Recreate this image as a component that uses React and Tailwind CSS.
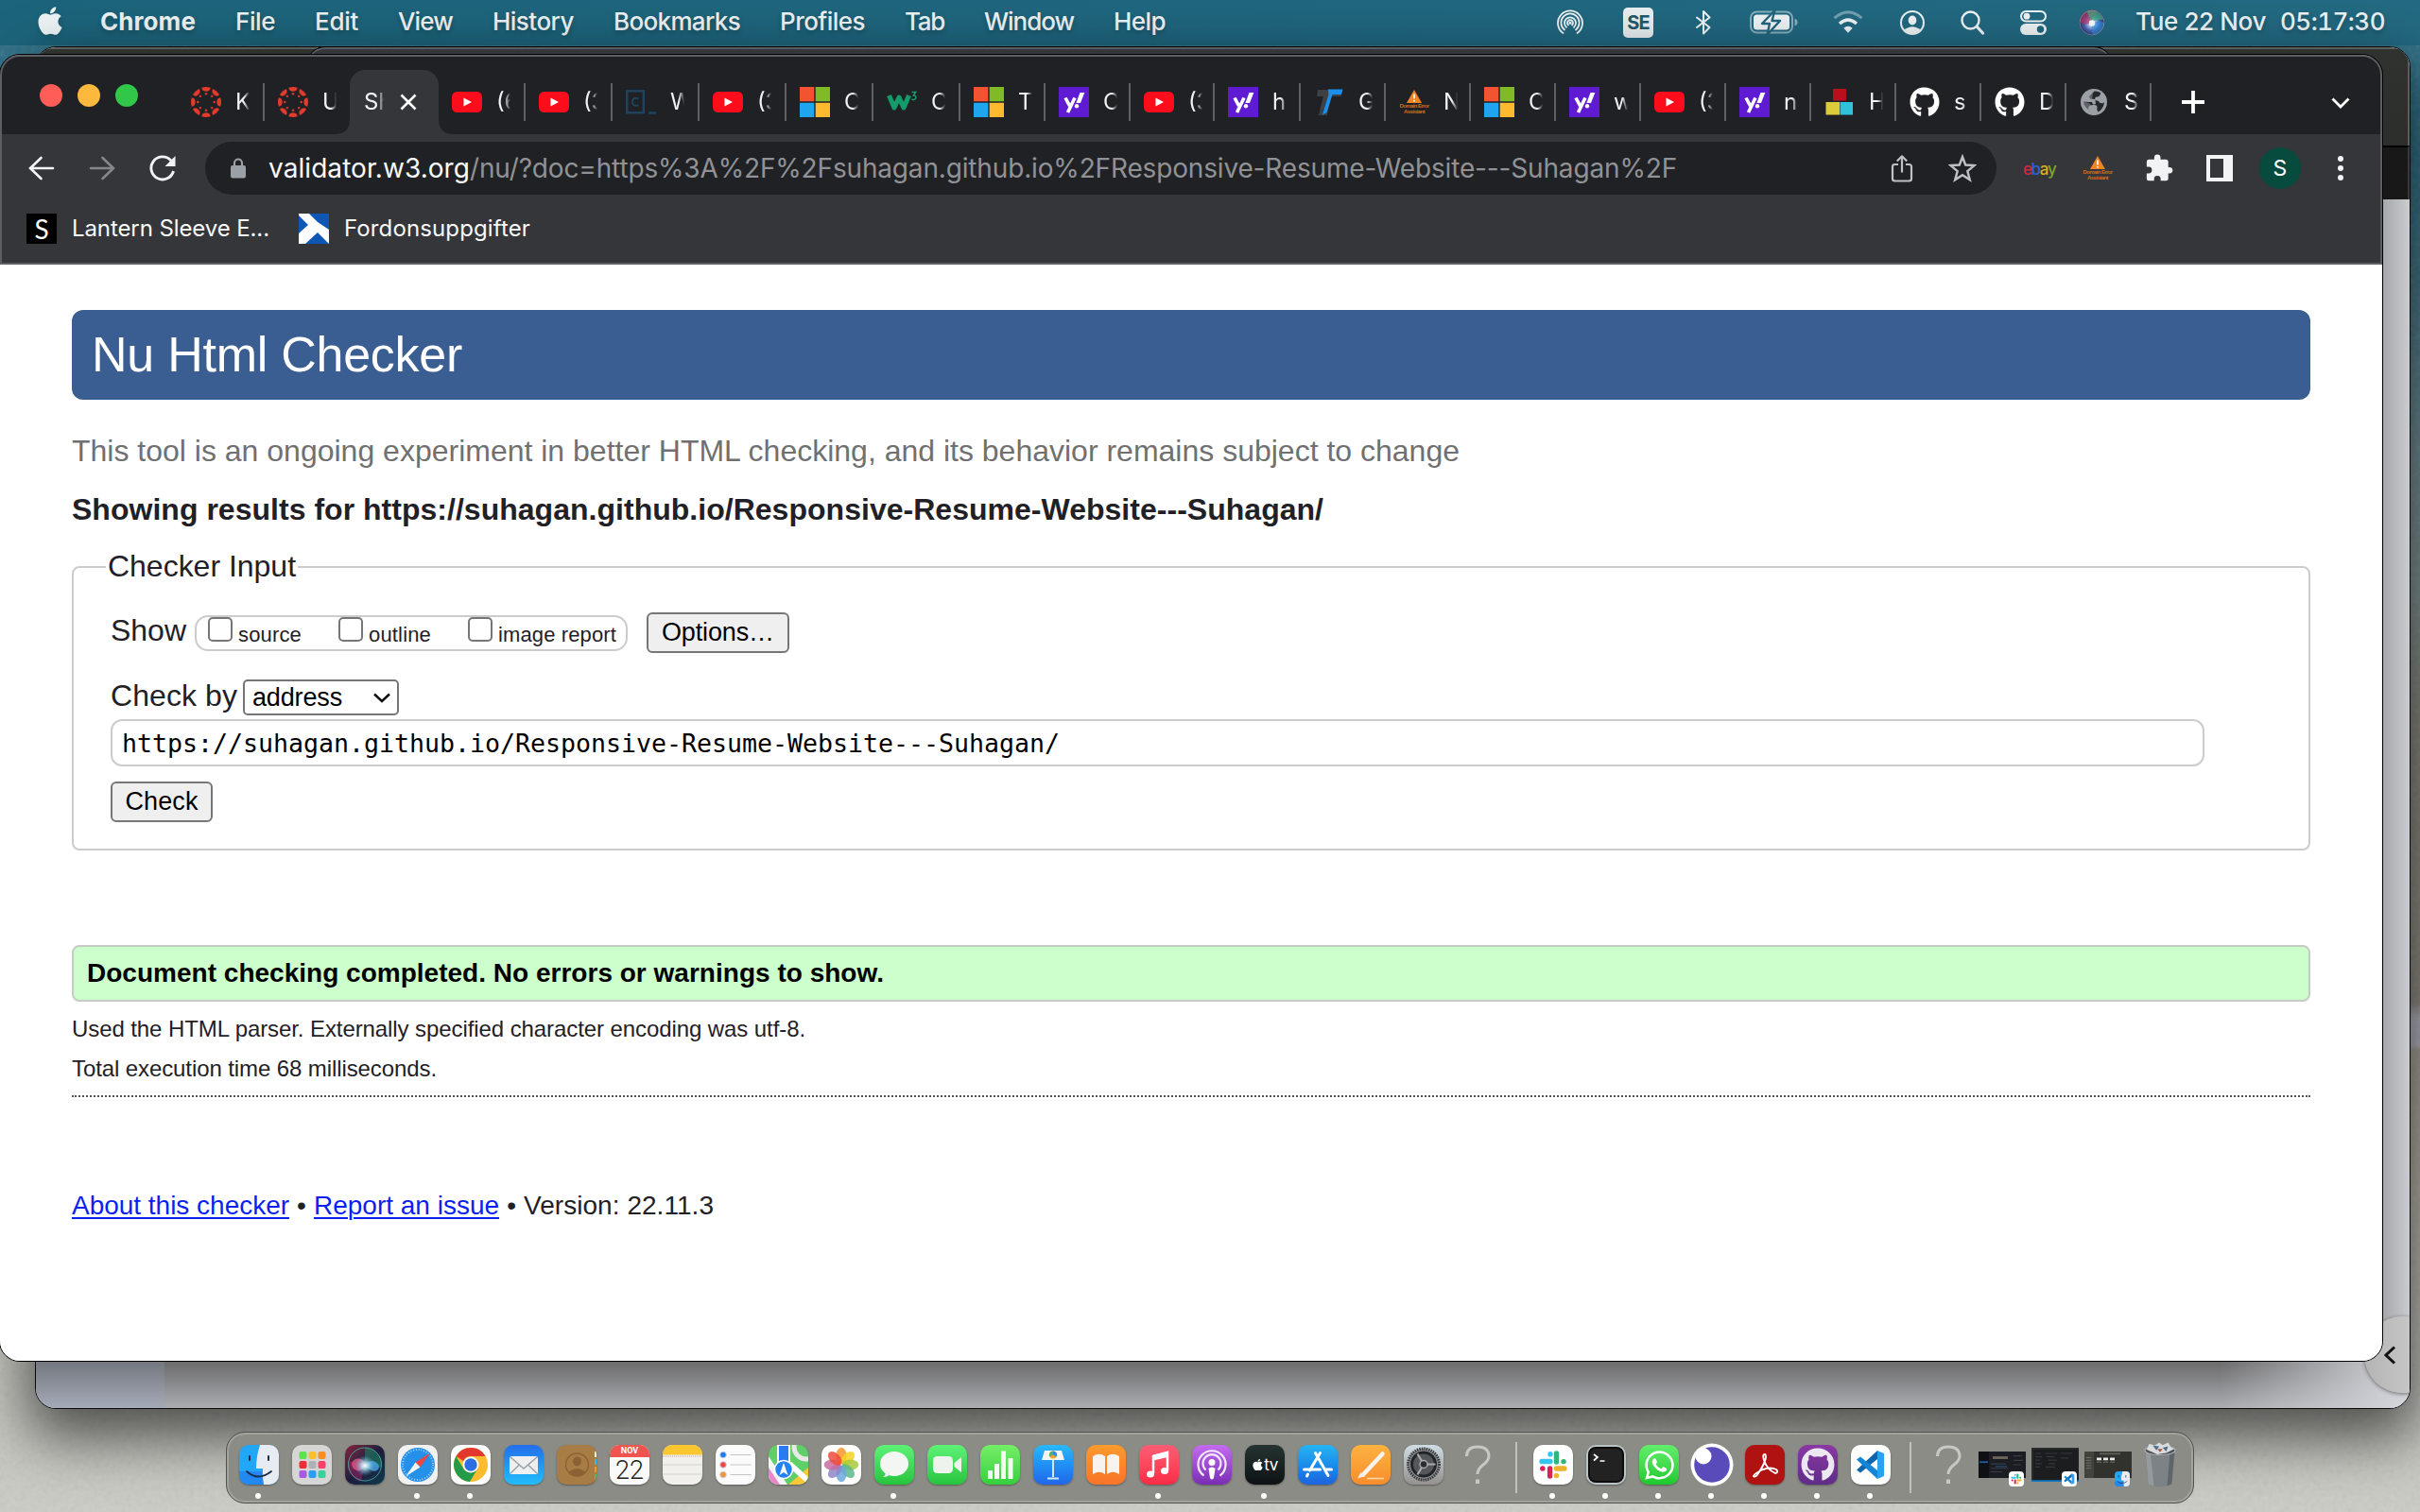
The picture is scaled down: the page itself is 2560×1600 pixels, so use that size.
import React, { useLayoutEffect, useRef } from "react";
import { FaApple, FaGithub, FaWhatsapp } from "react-icons/fa";

/* Text that spreads its letter spacing so that it fills a given width. */
function Fit({ w, className = "", children }) {
  const ref = useRef(null);
  useLayoutEffect(() => {
    const el = ref.current;
    el.style.letterSpacing = "0px";
    const range = document.createRange();
    range.selectNodeContents(el);
    const natural = range.getBoundingClientRect().width;
    el.style.letterSpacing = (w - natural) / el.textContent.length + "px";
  }, [w]);
  return (
    <span ref={ref} className={"inline-block shrink-0 whitespace-pre " + className}>
      {children}
    </span>
  );
}

/* ---------- menu bar ---------- */

const menus = [
  ["File", 42], ["Edit", 46], ["View", 58], ["History", 86], ["Bookmarks", 134],
  ["Profiles", 90], ["Tab", 42], ["Window", 95], ["Help", 55],
];

function SiriOrb({ id, className }) {
  return (
    <svg viewBox="0 0 28 28" className={className}>
      <defs>
        <radialGradient id={id} cx="50%" cy="52%" r="50%">
          <stop offset="0" stopColor="#fff" />
          <stop offset=".3" stopColor="#a9c4ea" />
          <stop offset=".6" stopColor="#4a66b8" />
          <stop offset="1" stopColor="#33305c" />
        </radialGradient>
      </defs>
      <circle cx="14" cy="14" r="13.500" fill={`url(#${id})`} />
      <path d="M1 13A13 13 0 0 1 20 2q-6 6-7 12-6 4-12-1z" fill="#c42b5d" opacity=".6" />
      <path d="M9 2a13 13 0 0 1 17 9q-7-1-11 2-5-4-6-11z" fill="#3fae7c" opacity=".7" />
      <path d="M27 14a13 13 0 0 1-12 13q-3-6 0-13 6-3 12 0z" fill="#2f8fe0" opacity=".6" />
      <circle cx="14" cy="14.500" r="3.200" fill="#fff" opacity=".95" />
      <circle cx="14" cy="14" r="13" fill="none" stroke="#9fd9d0" strokeWidth=".8" opacity=".6" />
    </svg>
  );
}

function MenuBar() {
  return (
    <div className="relative flex h-12 w-full items-center bg-linear-to-r from-[#1c647b] via-[#1f667e] to-[#236a82] pr-[37px] text-[26px] leading-[46px] text-[#eef3f5] font-['Inter'] [text-shadow:0_3px_5px_rgba(0,0,0,0.25)]">
      <FaApple className="mb-[4px] ml-[37px] h-[34px] w-[32px] shrink-0 drop-shadow-md" />
      <div className="mb-[3px] ml-[37px] flex gap-[42px]">
        <Fit w={101} className="font-bold">Chrome</Fit>
        {menus.map(([t, w]) => <Fit key={t} w={w} className="font-medium">{t}</Fit>)}
      </div>
      <div className="ml-auto flex items-center">
        <svg viewBox="0 0 28 28" className="h-[28px] w-[28px]" fill="none" stroke="#eef3f5" strokeWidth="1.800" strokeLinecap="round">
          <path d="M6.500 25A13 13 0 1 1 21.500 25" />
          <path d="M8 21.500A9.600 9.600 0 1 1 20 21.500" />
          <path d="M10 18.800A6 6 0 1 1 18 18.800" />
          <path d="M12 16.500A3 3 0 1 1 16 16.500" />
          <circle cx="14" cy="14.300" r="1.500" fill="#eef3f5" stroke="none" />
        </svg>
        <span className="ml-[42px] flex h-[32px] w-[32px] items-center justify-center rounded-[5px] bg-[#e9eef1] text-[20px] font-bold tracking-[-0.8px] text-[#1f5a70] [text-shadow:none]">SE</span>
        <svg viewBox="0 0 16 28" className="ml-[45px] h-[28px] w-[16px]" fill="none" stroke="#eef3f5" strokeWidth="2" strokeLinejoin="round" strokeLinecap="round">
          <path d="M1 8.500 14.500 19 8 25.500V2L14.500 8.500 1 19" />
        </svg>
        <svg viewBox="0 0 51 26" className="ml-[41px] h-[26px] w-[51px]" fill="none">
          <rect x="1" y="1.500" width="44" height="22" rx="6.500" stroke="#eef3f5" strokeOpacity=".5" strokeWidth="2" />
          <path d="M47.500 8.500q3 1 3 4t-3 4z" fill="#eef3f5" opacity=".5" />
          <rect x="4" y="4.500" width="38" height="16" rx="3.500" fill="#eef3f5" />
          <path d="M26.500 0 13 14h8l-2.500 11.500L32 11h-8.500z" fill="#eef3f5" stroke="#20667e" strokeWidth="2.400" strokeLinejoin="round" />
        </svg>
        <svg viewBox="0 0 32 24" className="mb-[2px] ml-[37px] h-[24px] w-[32px]" fill="none" stroke="#eef3f5">
          <path d="M1.500 8.200Q16-4.500 30.500 8.200" strokeWidth="3" opacity=".4" />
          <path d="M7 14Q16 6 25 14" strokeWidth="3.400" />
          <path d="M16 23.800 11.300 18.800q4.700-4 9.400 0z" fill="#eef3f5" stroke="none" />
        </svg>
        <svg viewBox="0 0 26 26" className="ml-[39px] h-[26px] w-[26px]" fill="none">
          <circle cx="13" cy="13" r="12" stroke="#eef3f5" strokeWidth="2" />
          <ellipse cx="13" cy="10.500" rx="4.300" ry="5" fill="#eef3f5" />
          <path d="M4 21q9-7.500 18 0-9 8-18 0z" fill="#eef3f5" />
        </svg>
        <svg viewBox="0 0 25 26" className="ml-[38px] h-[26px] w-[25px]" fill="none" stroke="#eef3f5" strokeLinecap="round">
          <circle cx="10.500" cy="10.500" r="9" strokeWidth="2.400" />
          <path d="m17.500 17.500 6 6.500" strokeWidth="3.200" />
        </svg>
        <svg viewBox="0 0 28 26" className="ml-[38px] h-[26px] w-[28px]" fill="none">
          <rect x="1" y="1" width="26" height="10.500" rx="5.250" stroke="#eef3f5" strokeWidth="2" />
          <circle cx="7" cy="6.200" r="3.400" fill="#eef3f5" />
          <rect x="0" y="14" width="28" height="12" rx="6" fill="#eef3f5" />
          <circle cx="21.500" cy="20" r="3.700" fill="#20667e" />
        </svg>
        <SiriOrb id="orbMenu" className="ml-[34px] h-[28px] w-[28px]" />
        <div className="mb-[3px] ml-[32px] flex gap-[15px] font-medium">
          <Fit w={138}>Tue 22 Nov</Fit>
          <Fit w={111} className="tabular-nums">05:17:30</Fit>
        </div>
      </div>
    </div>
  );
}

/* ---------- favicons ---------- */

function Canvas() {
  return (
    <svg viewBox="0 0 32 32" className="h-8 w-8">
      {[0, 45, 90, 135, 180, 225, 270, 315].map((a) => (
        <g key={a} transform={`rotate(${a} 16 16)`} fill="#e13b2b">
          <path d="M11.300.800Q16-.700 20.700.800 20.200 4.700 16 4.700T11.300.800z" />
          <circle cx="16" cy="7.300" r="1.200" />
        </g>
      ))}
    </svg>
  );
}
function YouTube() {
  return (
    <svg viewBox="0 0 32 32" className="h-8 w-8">
      <rect x="0" y="5" width="32" height="22" rx="5.500" fill="#fd0d1b" />
      <path d="m12.500 11.500 8.500 4.500-8.500 4.500z" fill="#fff" />
    </svg>
  );
}
function Microsoft() {
  return (
    <svg viewBox="0 0 32 32" className="h-8 w-8">
      <path fill="#f25330" d="M0 0h15.300v15.300H0z" />
      <path fill="#80ba27" d="M16.700 0H32v15.300H16.700z" />
      <path fill="#1ea5ee" d="M0 16.700h15.300V32H0z" />
      <path fill="#fdba2f" d="M16.700 16.700H32V32H16.700z" />
    </svg>
  );
}
function Yahoo() {
  return (
    <svg viewBox="0 0 32 32" className="h-8 w-8">
      <path fill="#5f1bd1" d="M0 0h32v32H0z" />
      <path d="M7 11.500 11.500 20M17 11.500 9.500 27" stroke="#fff" strokeWidth="3.600" fill="none" />
      <path d="M22.500 6h4.800l-4.300 11h-4.600z" fill="#fff" />
      <circle cx="19" cy="20.300" r="2.200" fill="#fff" />
    </svg>
  );
}
function Codecademy() {
  return (
    <svg viewBox="0 0 32 32" className="h-8 w-8" fill="none" stroke="#1f4460">
      <rect x="1.300" y="4.300" width="17.500" height="23" strokeWidth="2.400" />
      <path d="M13.500 12.500q-6-2.500-6.500 3t6.500 4" strokeWidth="2" />
      <path d="M24 27.500h8" strokeWidth="2.400" />
    </svg>
  );
}
function W3() {
  return (
    <svg viewBox="0 0 32 32" className="h-8 w-8" fill="none" stroke="#149b6a">
      <path d="M2.500 9 8 22 13 11l5 11 5.500-13" strokeWidth="5" strokeLinejoin="round" />
      <path d="M26.500 5.500h4.200l-2.500 3.500q3.300.200 2.500 3-1.200 2.300-4.200 1" strokeWidth="1.500" />
    </svg>
  );
}
function BlueT() {
  return (
    <svg viewBox="0 0 32 32" className="h-8 w-8">
      <path d="M4 3h26l-1.500 7H18.500l-4.700 20h-9l5-20H3z" fill="#3c4148" />
      <path d="M15 2.500h15.500L29 8h-9.500L13.500 27l-4.500 2.500L15.500 8z" fill="#1b8fec" />
    </svg>
  );
}
function DomainError() {
  return (
    <span className="flex h-8 w-8 flex-col items-center pt-[3px] font-['Liberation_Sans'] text-[6px] leading-[6px] font-bold text-[#cf6d1d]">
      <svg viewBox="0 0 16 14" className="h-[14px] w-[16px] shrink-0">
        <path d="M8 0 16 14H0z" fill="#f08424" />
        <path d="M8 4.500v5M8 11v1.500" stroke="#fff" strokeWidth="1.600" />
      </svg>
      <Fit w={31}>Domain Error</Fit>
      <Fit w={22}>Assistant</Fit>
    </span>
  );
}
function Blocks() {
  return (
    <svg viewBox="0 0 32 32" className="h-8 w-8">
      <path fill="#b90f1b" d="M9 2h14v12.500H9z" />
      <path fill="#dccb3a" d="M1.500 16H16v13.500H1.500z" />
      <path fill="#2fc2d8" d="M16.500 16H30v13.500H16.500z" />
    </svg>
  );
}
function Globe() {
  return (
    <svg viewBox="0 0 32 32" className="h-8 w-8">
      <circle cx="15" cy="16" r="14" fill="#9aa0a6" />
      <path d="M15.500 4.500q4-.500 7 2l-2 3.500-4 1-.500 3 4 1q1 3 5 2l1-1q-.500 7-6.500 10.500-2-2-1-5 0-3-4-2.500l-4 .500q-2 2-1 4.500-5-3-5.500-8.500l5 .500h4l1 2.500q3 .500 3-1.500l-1-4-5-.500-1-2.500 2-2z" fill="#202124" opacity=".95" />
      <path d="M14 5.500q-5 1-8 6l2 3 5-1z M3.500 15q1 6 6.500 10l5 2.500q2-1 1.500-4l-4-2-2-4z" fill="#9aa0a6" opacity=".5" />
    </svg>
  );
}
function Hub() {
  return <FaGithub className="h-8 w-8 text-white" />;
}

const tabs = [
  [YouTube, "(6", 92], [YouTube, "(3", 92], [Codecademy, "W", 92], [YouTube, "(3", 92],
  [Microsoft, "C", 92], [W3, "C", 92], [Microsoft, "T", 90], [Yahoo, "C", 90],
  [YouTube, "(3", 89], [Yahoo, "h", 91], [BlueT, "G", 90], [DomainError, "N", 90],
  [Microsoft, "C", 90], [Yahoo, "w", 90], [YouTube, "(3", 90], [Yahoo, "n", 90],
  [Blocks, "H", 90], [Hub, "s", 90], [Hub, "D", 90], [Globe, "S", 90],
];

function Tab({ Icon, text, w, bar = true }) {
  return (
    <div className="flex h-[68px] shrink-0 items-center" style={{ width: w }}>
      <span className="ml-[14px] flex h-8 w-8 shrink-0"><Icon /></span>
      <span className="ml-[15px] w-[15px] overflow-hidden text-[24px] leading-[32px] text-[#f1f3f4] [mask-image:linear-gradient(to_right,#000_60%,transparent)]">{text}</span>
      {bar && <span className="ml-auto h-10 w-[2px] bg-[#5f6063]" />}
    </div>
  );
}

function TabStrip() {
  return (
    <div className="flex h-[82px] w-full bg-[#202124] pt-[14px] font-['Inter']">
      <div className="ml-[42px] flex h-[54px] w-[146px] items-center gap-4">
        <span className="h-6 w-6 rounded-full bg-[#fe5e57]" />
        <span className="h-6 w-6 rounded-full bg-[#fdb93e]" />
        <span className="h-6 w-6 rounded-full bg-[#31c748]" />
      </div>
      <Tab Icon={Canvas} text="K" w={92} />
      <Tab Icon={Canvas} text="U" w={90} bar={false} />
      <div className="relative flex h-[68px] w-[94px] shrink-0 items-center rounded-t-[16px] bg-[#35363a]">
        <svg viewBox="0 0 16 16" className="absolute bottom-0 -left-4 h-4 w-4"><path d="M16 0v16H0Q16 16 16 0z" fill="#35363a" /></svg>
        <svg viewBox="0 0 16 16" className="absolute -right-4 bottom-0 h-4 w-4"><path d="M0 0v16h16Q0 16 0 0z" fill="#35363a" /></svg>
        <span className="ml-[15px] w-[21px] overflow-hidden text-[24px] leading-[32px] text-[#f1f3f4] [mask-image:linear-gradient(to_right,#000_75%,transparent)]">Sh</span>
        <svg viewBox="0 0 18 18" className="ml-[17px] h-[18px] w-[18px]"><path d="m1.500 1.500 15 15m0-15-15 15" stroke="#fff" strokeWidth="2.600" /></svg>
      </div>
      {tabs.map(([I, t, w], i) => <Tab key={i} Icon={I} text={t} w={w} />)}
      <svg viewBox="0 0 24 24" className="mt-[22px] ml-[32px] h-6 w-6 shrink-0"><path d="M12 0v24M0 12h24" stroke="#fff" strokeWidth="3.800" /></svg>
      <svg viewBox="0 0 20 12" className="mt-[29px] mr-[34px] ml-auto h-3 w-5 shrink-0"><path d="m1.500 1.500 8.500 8.500 8.500-8.500" fill="none" stroke="#fff" strokeWidth="2.800" /></svg>
    </div>
  );
}

function Toolbar() {
  return (
    <div className="flex h-[72px] w-full items-center bg-[#35363a] font-['Inter']">
      <svg viewBox="0 0 28 26" className="ml-[30px] h-[26px] w-[28px] shrink-0" fill="none" stroke="#f1f3f4" strokeWidth="2.600" strokeLinecap="round"><path d="M26 13H2.500M13.500 2 2 13l11.500 11" /></svg>
      <svg viewBox="0 0 28 26" className="ml-[36px] h-[26px] w-[28px] shrink-0" fill="none" stroke="#85868a" strokeWidth="2.600" strokeLinecap="round"><path d="M2 13h23.500M14.500 2 26 13 14.500 24" /></svg>
      <svg viewBox="0 0 28 28" className="ml-[36px] h-[28px] w-[28px] shrink-0" fill="none" stroke="#f1f3f4" strokeWidth="2.900"><path d="M25.500 17A12 12 0 1 1 22.500 5.500L26 9" /><path d="M27.500 1v11h-11z" fill="#f1f3f4" stroke="none" /></svg>
      <div className="ml-[31px] flex h-[56px] w-[1895px] shrink-0 items-center rounded-full bg-[#202124]">
        <svg viewBox="0 0 16 22" className="mb-[1px] ml-[27px] h-[22px] w-[16px]"><rect x="0" y="8" width="16" height="13.500" rx="2" fill="#9aa0a6" /><path d="M4 9V5.500a4 4 0 0 1 8 0V9" fill="none" stroke="#9aa0a6" strokeWidth="2.200" /></svg>
        <div className="ml-[24px] flex text-[28px] leading-[56px]">
          <Fit w={213} className="text-[#f8f9fa]">validator.w3.org</Fit>
          <Fit w={1277} className="text-[#909296]">/nu/?doc=https%3A%2F%2Fsuhagan.github.io%2FResponsive-Resume-Website---Suhagan%2F</Fit>
        </div>
        <svg viewBox="0 0 24 30" className="ml-auto h-[30px] w-[24px]" fill="none" stroke="#c0c1c4" strokeWidth="2.200"><path d="M8 11H4.500Q2 11 2 13.500V26q0 2.500 2.500 2.500h15Q22 28.500 22 26V13.500Q22 11 19.500 11H16M12 19.500V2.500M6.800 7.500 12 2.300l5.200 5.200" strokeLinejoin="round" /></svg>
        <svg viewBox="0 0 30 30" className="mr-[21px] ml-[37px] h-[30px] w-[30px]" fill="none" stroke="#c0c1c4" strokeWidth="2.400"><path d="m15 3 3.200 8.500 9.300.600-7.200 6 2.500 9.200L15 22.300l-7.800 5 2.500-9.200-7.200-6 9.300-.600z" /></svg>
      </div>
      <span className="mt-[2px] ml-[28px] flex w-[34px] text-[17px] leading-[24px] font-medium tracking-[-1.4px]">
        <span className="text-[#d0273f]">e</span><span className="text-[#2b62d9]">b</span><span className="text-[#dfae1f]">a</span><span className="text-[#7da72a]">y</span>
      </span>
      <span className="ml-[29px] flex"><DomainError /></span>
      <svg viewBox="0 0 30 30" className="-mt-[2px] ml-[35px] h-[29px] w-[29px] shrink-0"><path fill="#f1f3f4" d="M26.500 14.500h-2V8.700q0-2.700-2.700-2.700H16V4a3.400 3.400 0 0 0-6.800 0v2H3.500Q.900 6 .900 8.700V14H3a3.600 3.600 0 0 1 0 7.200H.900v5.500q0 2.600 2.600 2.600H9v-2a3.600 3.600 0 0 1 7.200 0v2h5.600q2.700 0 2.700-2.600v-5.500h2a3.400 3.400 0 0 0 0-6.700z" /></svg>
      <span className="ml-[35px] h-[28px] w-[28px] shrink-0 border-4 border-r-[10px] border-[#f1f3f4]" />
      <span className="ml-[28px] flex h-[44px] w-[44px] shrink-0 items-center justify-center rounded-full bg-[#064b3d] text-[23px] text-white">S</span>
      <span className="ml-[39px] flex flex-col gap-[4px]">
        <span className="h-[6px] w-[6px] rounded-full bg-[#f1f3f4]" /><span className="h-[6px] w-[6px] rounded-full bg-[#f1f3f4]" /><span className="h-[6px] w-[6px] rounded-full bg-[#f1f3f4]" />
      </span>
    </div>
  );
}

function Bookmarks() {
  return (
    <div className="flex h-[66px] w-full border-b-2 border-[#5d5e62] bg-[#35363a] pt-[12px] font-['Inter'] text-[24px] leading-[31px] text-[#f8f9fa]">
      <span className="ml-[28px] flex h-8 w-8 items-center justify-center bg-black font-['Lato'] text-[28px] text-white">S</span>
      <Fit w={209} className="ml-[16px]">Lantern Sleeve E...</Fit>
      <svg viewBox="0 0 32 32" className="ml-[31px] h-8 w-8"><path fill="#0f57b5" d="M0 0h32v32H0z" /><path fill="#fff" d="M0 0h11l9 9 12 8v15L20 20 7 32H0V21l10-9L0 2z" /></svg>
      <Fit w={197} className="ml-[16px]">Fordonsuppgifter</Fit>
    </div>
  );
}

/* ---------- page ---------- */

function Option({ label, w, className = "" }) {
  return (
    <span className={"flex items-center " + className}>
      <span className="mb-[8px] h-[26px] w-[26px] rounded-[5px] border-2 border-[#767676] bg-white" />
      <Fit w={w} className="ml-[6px] pt-[3px] text-[22px] leading-[31px]">{label}</Fit>
    </span>
  );
}

function Checker() {
  return (
    <div className="h-[1160px] w-full bg-white px-[76px] pt-[48px] font-['Liberation_Sans'] text-[#1f2126]">
      <div className="flex h-[95px] items-center rounded-[12px] bg-[#3b5e92] pb-[2px] pl-[21px] text-[52px] text-white">
        <Fit w={392}>Nu Html Checker</Fit>
      </div>
      <p className="mt-[34px] h-10 text-[32px] leading-10 text-[#707070]"><Fit w={1468}>This tool is an ongoing experiment in better HTML checking, and its behavior remains subject to change</Fit></p>
      <p className="mt-[22px] h-10 text-[32px] leading-10 font-bold"><Fit w={1324}>Showing results for https://suhagan.github.io/Responsive-Resume-Website---Suhagan/</Fit></p>
      <fieldset className="mt-[23px] h-[318px] rounded-[8px] border-2 border-[#ccc] pl-[34px]">
        <legend className="h-[36px] px-[2px] pb-[2px] text-[32px] leading-[34px]"><Fit w={199}>Checker Input</Fit></legend>
        <div className="mt-[30px] ml-[5px] flex h-[43px] items-center">
          <Fit w={80} className="pb-[5px] text-[32px] leading-9">Show</Fit>
          <div className="ml-[9px] flex h-[38px] w-[458px] items-center rounded-[14px] border-2 border-[#ccc] pl-[12px]">
            <Option label="source" w={67} />
            <Option label="outline" w={66} className="ml-[39px]" />
            <Option label="image report" w={125} className="ml-[39px]" />
          </div>
          <button className="ml-[20px] h-[43px] w-[151px] rounded-[6px] border-2 border-[#767676] bg-[#efefef] pb-[2px] text-[27px] leading-[36px] text-black"><Fit w={119}>Options…</Fit></button>
        </div>
        <div className="mt-[28px] ml-[5px] flex h-[38px] items-center">
          <Fit w={134} className="pb-[4px] text-[32px] leading-9">Check by</Fit>
          <div className="ml-[6px] flex h-[38px] w-[165px] items-center rounded-[5px] border-2 border-[#767676] bg-white pr-[7px] pl-[8px] text-[27px] leading-[32px] text-black">
            <Fit w={95}>address</Fit>
            <svg viewBox="0 0 18 11" className="ml-auto h-[11px] w-[18px]"><path d="m1 1.500 8 7.500 8-7.500" fill="none" stroke="#111" strokeWidth="2.400" /></svg>
          </div>
        </div>
        <div className="mt-[4px] ml-[5px] flex h-[50px] w-[2215px] items-center rounded-[12px] border-2 border-[#ccc] pt-[2px] pl-[10px] font-['DejaVu_Sans_Mono'] text-[26.6px] leading-[44px] text-black">
          <Fit w={992}>https://suhagan.github.io/Responsive-Resume-Website---Suhagan/</Fit>
        </div>
        <button className="mt-[16px] ml-[5px] block h-[43px] w-[108px] rounded-[6px] border-2 border-[#767676] bg-[#efefef] pb-[2px] text-[27px] leading-[36px] text-black"><Fit w={77}>Check</Fit></button>
      </fieldset>
      <div className="mt-[100px] flex h-[60px] items-center rounded-[8px] border-2 border-[#c5cbc5] bg-[#ccffcc] pl-[14px] text-[28px] font-bold text-black">
        <Fit w={843}>Document checking completed. No errors or warnings to show.</Fit>
      </div>
      <p className="mt-[13px] h-8 text-[24px] leading-8"><Fit w={776}>Used the HTML parser. Externally specified character encoding was utf-8.</Fit></p>
      <p className="mt-[10px] h-8 text-[24px] leading-8"><Fit w={386}>Total execution time 68 milliseconds.</Fit></p>
      <div className="mt-[12px] border-t-2 border-dotted border-[#555]" />
      <p className="mt-[95px] flex h-10 text-[28px] leading-10">
        <Fit w={230} className="text-[#0a1ff0] underline decoration-2 underline-offset-[3px]">About this checker</Fit>
        <span className="w-[26px] text-center">•</span>
        <Fit w={196} className="text-[#0a1ff0] underline decoration-2 underline-offset-[3px]">Report an issue</Fit>
        <span className="w-[26px] text-center">•</span>
        <Fit w={201}>Version: 22.11.3</Fit>
      </p>
    </div>
  );
}

/* ---------- dock ---------- */

function Tile({ children, dot, bg = "" }) {
  return (
    <div className="relative flex h-[42px] w-[42px] shrink-0">
      <div className={"flex h-[42px] w-[42px] items-center justify-center overflow-hidden rounded-[10px] shadow-[0_1px_2px_rgba(0,0,0,0.35)] " + bg}>{children}</div>
      {dot && <span className="absolute top-[51px] left-[17px] h-[6px] w-[6px] rounded-full bg-white" />}
    </div>
  );
}
function G({ children }) {
  return <svg viewBox="0 0 42 42" className="h-[42px] w-[42px] shrink-0">{children}</svg>;
}

function Finder() {
  return (
    <>
      <path fill="#22a6f8" d="M0 0h42v42H0z" />
      <path fill="#2774ee" d="M0 28h42v14H0z" opacity=".6" />
      <path d="M22 0h20v42H26q-2-9-1-17h-7Q18 12 22 0z" fill="#e7ebf2" />
      <path d="M11 12v4M31 12v4" stroke="#1a2b44" strokeWidth="2" strokeLinecap="round" />
      <path d="M8 28q12 11 26 0" stroke="#1a2b44" strokeWidth="1.800" fill="none" strokeLinecap="round" />
    </>
  );
}
function Slack() {
  return (
    <g strokeWidth="5.400" strokeLinecap="round" fill="none">
      <path d="M9 17.500h9M18 9.800v.100" stroke="#36c5f0" /><path d="M24.500 9v9M32 17.600h.100" stroke="#2eb67d" />
      <path d="M24.500 25h8.500M24.500 32.500v.100" stroke="#ecb22e" /><path d="M17.600 25v8M9.800 25h.100" stroke="#e01e5a" />
    </g>
  );
}
function Code() {
  return (
    <>
      <path d="M28 6 35 9v24l-7 3z" fill="#2ba1f1" />
      <path d="M28 6v9L10 29.500 6 26.500z" fill="#0b66ae" />
      <path d="M28 36v-9L10 12.500 6 15.500z" fill="#1484d6" />
    </>
  );
}
function Question() {
  return (
    <svg viewBox="0 0 42 42" className="h-[42px] w-[42px] shrink-0" fill="none" stroke="#c6c8c4">
      <path d="M10.500 12Q10.500 2 22 2t12 9.500q0 5-6 9.500t-6 10" strokeWidth="3" />
      <path d="M22 36.500V41" strokeWidth="4" />
    </svg>
  );
}
function Thumb({ children, tall, badge, mini }) {
  return (
    <div className="relative flex h-[42px] w-[50px] shrink-0 items-center">
      <svg viewBox="0 0 50 30" preserveAspectRatio="none" className={tall ? "h-[36px] w-[50px]" : "h-[28px] w-[50px]"}>{children}</svg>
      <span className={"absolute top-[28px] left-[32px] flex h-4 w-4 overflow-hidden rounded-[4px] " + mini}><svg viewBox="0 0 42 42" className="h-4 w-4">{badge}</svg></span>
    </div>
  );
}

const petals = ["#f7952b", "#f4d321", "#a8c93b", "#5cb88a", "#6aa8dc", "#8f86c8", "#c96b9f", "#ee4c3c"];
const launch = ["#5fe04c", "#fdc02d", "#fb8c1e", "#ec2f37", "#aeb1b6", "#fb4069", "#a45be0", "#2a9df5", "#3bcf9c"];

function Dock() {
  return (
    <div className="flex h-[76px] w-[2082px] rounded-[20px] border border-[#4f524d] bg-[#8b8c85] pt-[13px] pl-[13px] shadow-[inset_0_0_0_2px_#a0a29b]">
      <div className="flex gap-[14px]">
        <Tile dot><G><Finder /></G></Tile>
        <Tile bg="bg-[#d6d6d6]"><G>{launch.map((c, i) => <rect key={i} x={7.5 + (i % 3) * 10} y={7 + Math.floor(i / 3) * 10} width="8" height="8" rx="2" fill={c} />)}</G></Tile>
        <Tile bg="bg-linear-to-br from-[#8a1a3c] via-[#1c1c3c] to-[#0a3a4e]"><G>
          <defs><radialGradient id="siriGlow"><stop offset="0" stopColor="#fff" /><stop offset=".35" stopColor="#b5e6f2" stopOpacity=".8" /><stop offset="1" stopColor="#4aa0d0" stopOpacity="0" /></radialGradient></defs>
          <path d="M21 3A18 18 0 0 1 38.500 24L21 21z" fill="#1d8c6a" opacity=".55" />
          <path d="M3.500 17A18 18 0 0 0 17 38.500L21 21z" fill="#a3246a" opacity=".5" />
          <circle cx="21" cy="20.500" r="17.500" fill="none" stroke="#4fc9b0" strokeWidth="1" opacity=".7" />
          <path d="M7 20a7 6 0 0 1 14 1q-4 8-9 6t-5-7z" fill="#e0557f" opacity=".8" />
          <path d="M21 22q5-7 11-4t3 8q-4 5-14-4z" fill="#4aa6ec" opacity=".8" />
          <circle cx="21" cy="22" r="11" fill="url(#siriGlow)" />
        </G></Tile>
        <Tile dot bg="bg-[#f1f1f1]"><G>
          <circle cx="21" cy="21" r="18" fill="#2490ea" /><circle cx="21" cy="21" r="16" fill="none" stroke="#bfe0fb" strokeWidth="2" strokeDasharray=".8 2" />
          <path d="M34 8.500 23.500 23.500 18.500 18.500z" fill="#f0443c" /><path d="M8 33.500 18.500 18.500l5 5z" fill="#f3f3f3" />
        </G></Tile>
        <Tile dot bg="bg-white"><G>
          <circle cx="21" cy="21" r="18" fill="#fbbc2e" />
          <path d="M5.400 12A18 18 0 0 1 36.600 12H21a9 9 0 0 0-8 5z" fill="#e1392f" />
          <path d="M5.400 12A18 18 0 0 0 20 39l8-13.500a9 9 0 0 1-14.500 0z" fill="#249b4a" />
          <circle cx="21" cy="21" r="8.500" fill="#fff" /><circle cx="21" cy="21" r="6.700" fill="#2d6fe0" />
        </G></Tile>
        <Tile bg="bg-linear-to-b from-[#256eea] to-[#23bdfb]"><G>
          <rect x="6" y="12" width="30" height="19" rx="2.500" fill="#efefef" /><path d="m7 13 14 12 14-12M7 30l9.500-9M35 30l-9.500-9" fill="none" stroke="#9aa0a8" strokeWidth="1.400" />
        </G></Tile>
        <Tile bg="bg-[#a87c45]"><G>
          <path d="M40 7h2v6h-2z" fill="#eee" /><path d="M40 15h2v6h-2z" fill="#3fb5e8" /><path d="M40 23h2v6h-2z" fill="#f09a2e" /><path d="M40 31h2v6h-2z" fill="#4fc45a" />
          <circle cx="21.500" cy="21" r="12" fill="none" stroke="#8a6233" strokeWidth="1.400" /><ellipse cx="21.500" cy="17.500" rx="4.500" ry="5" fill="#8a6233" /><path d="M12.500 28.500q9-7 18 0-9 8-18 0z" fill="#8a6233" />
        </G></Tile>
        <Tile bg="bg-[#fafafa]">
          <div className="flex h-full w-full flex-col items-center font-['Roboto']">
            <span className="flex h-[13px] w-full items-center justify-center bg-[#ef544e] text-[9px] font-bold text-white">NOV</span>
            <span className="text-[27px] leading-[28px] font-light text-[#222]">22</span>
          </div>
        </Tile>
        <Tile bg="bg-[#f2f0ec]"><G><path fill="#fcc62e" d="M0 0h42v10.500H0z" /><path d="M0 12h42" stroke="#aaa" strokeDasharray="1 1" /><path d="M0 21h42M0 31h42" stroke="#d4d2ce" /></G></Tile>
        <Tile bg="bg-[#fbfbfb]"><G>
          {["#1a7df0", "#ee4640", "#f0953a"].map((c, i) => <g key={c}><circle cx="8" cy={10.5 + i * 10.5} r="3.300" fill={c} stroke="#ccd" /><path d={`M15.500 ${10.5 + i * 10.5}h22`} stroke="#c5c5c8" strokeWidth="1.200" /></g>)}
        </G></Tile>
        <Tile bg="bg-[#5fcf6a]"><G>
          <path d="M0 12 20 42H0z" fill="#f4f4f4" /><path d="M0 24 12 42H0z" fill="#ea86ca" /><path d="M21 42 42 24v18z" fill="#fcc83a" /><path d="M22 20 42 38" stroke="#fff" strokeWidth="6" />
          <path d="M10 0h12v20H10z" fill="#2a7bf2" stroke="#fff" strokeWidth="2" /><circle cx="40" cy="2" r="13" fill="none" stroke="#e8e8e8" strokeWidth="5" />
          <circle cx="16" cy="26" r="9.500" fill="#2482f4" stroke="#fff" strokeWidth="1.500" /><path d="m16 19 4.500 13-4.500-3-4.500 3z" fill="#fff" />
        </G></Tile>
        <Tile bg="bg-white"><G>{petals.map((c, i) => <ellipse key={c} cx="21" cy="11.500" rx="5.500" ry="8.800" fill={c} opacity=".85" transform={`rotate(${i * 45} 21 21)`} />)}</G></Tile>
        <Tile dot bg="bg-linear-to-b from-[#5df276] to-[#25c43d]"><G><ellipse cx="21" cy="20" rx="15" ry="13" fill="#f3f6f3" /><path d="M12 28q0 4-3 6 5 0 8-3z" fill="#eee" /></G></Tile>
        <Tile bg="bg-linear-to-b from-[#5df276] to-[#25c43d]"><G><rect x="6" y="12" width="21" height="18" rx="4.500" fill="#eef3ee" /><path d="m28.500 19 7.500-6v16l-7.500-6z" fill="#eef3ee" /></G></Tile>
        <Tile bg="bg-linear-to-b from-[#74ef67] to-[#34cf3d]"><G><path d="M10.500 36v-9M17.500 36V20M24.500 36V6.500M32 36V14" stroke="#f3fbf3" strokeWidth="5" /></G></Tile>
        <Tile bg="bg-linear-to-b from-[#2bb8fb] to-[#2266ea]"><G><path d="M12 6h18l3 10H9z" fill="#f4f4f4" /><circle cx="21" cy="10.500" r="4" fill="#f2a63a" /><path d="M21 10.500V6.500a4 4 0 0 1 3.500 6z" fill="#2c8cf0" /><path d="M21 10.500 17.500 12.500A4 4 0 0 1 21 6.500z" fill="#45bb55" /><path d="M21 16v18M15 35.500h12" stroke="#d8e6f8" strokeWidth="2" /></G></Tile>
        <Tile bg="bg-linear-to-b from-[#fd9a2c] to-[#f8742a]"><G><path d="M7 12q7-4.500 13 0v19q-6-4.500-13 0zM35 12q-7-4.500-13 0v19q6-4.500 13 0z" fill="#f8f3ee" /></G></Tile>
        <Tile dot bg="bg-linear-to-b from-[#fb5d74] to-[#fa2a45]"><G><path d="M15 30V12l15-4v19" fill="none" stroke="#fff" strokeWidth="2.500" /><path d="M15 10.500 30 7v6l-15 3.500z" fill="#fff" /><ellipse cx="12" cy="31" rx="4" ry="3.500" fill="#fff" /><ellipse cx="27" cy="27.500" rx="4" ry="3.500" fill="#fff" /></G></Tile>
        <Tile bg="bg-linear-to-b from-[#c56bf0] to-[#7a2db4]"><G><g fill="none" stroke="#f4e8fb" strokeWidth="2.200"><path d="M12.500 32.500A14.500 14.500 0 1 1 29.500 32.500" /><path d="M14.500 26.500A9.500 9.500 0 1 1 27.500 26.500" /></g><circle cx="21" cy="18.500" r="3.500" fill="#fff" /><path d="M17.500 25q3.500-3 7 0l-1.500 10q-2 3-4 0z" fill="#fff" /></G></Tile>
        <Tile dot bg="bg-linear-to-b from-[#253531] to-[#0d1214]">
          <div className="flex items-center font-['Inter'] text-[17px] leading-[20px] tracking-[-0.5px] text-white"><FaApple className="mb-[1px] h-[14px] w-[13px]" />tv</div>
        </Tile>
        <Tile bg="bg-linear-to-b from-[#26b4f4] to-[#1d63dd]"><G><path d="M18.500 8.500 32 32.500M23.500 8.500 12.500 27M6.500 26h17M28.500 26h7M10.500 31l-1 2" stroke="#fff" strokeWidth="3" strokeLinecap="round" /></G></Tile>
        <Tile bg="bg-linear-to-b from-[#fdb241] to-[#f88d2c]"><G><path d="M33.500 9.500 13 31.500" stroke="#f7f4f0" strokeWidth="4.500" strokeLinecap="round" /><path d="m10.500 29 4.500 4-8 2.500z" fill="#eee" /><path d="M17 35.500h18" stroke="#fbd9ac" strokeWidth="1.400" /></G></Tile>
        <Tile bg="bg-linear-to-b from-[#cfdde4] to-[#93918f]"><G><circle cx="21" cy="20.500" r="16.500" fill="#8f9192" stroke="#35383a" strokeWidth="3" strokeDasharray="1.500 1" /><circle cx="21" cy="20.500" r="12.500" fill="#55585a" stroke="#222527" strokeWidth="3" /><path d="M21 20.500H33.500M21 20.500 14.500 9.500M21 20.500 14.500 31.500" stroke="#a9abac" strokeWidth="2.200" /><circle cx="21" cy="20.500" r="4" fill="#2b2e30" stroke="#a9abac" strokeWidth="1.500" /></G></Tile>
        <Question />
      </div>
      <span className="-mt-[3px] ml-[20px] h-[54px] w-[2px] bg-[#bfc1bb]" />
      <div className="ml-[17px] flex gap-[14px]">
        <Tile dot bg="bg-white"><G><Slack /></G></Tile>
        <Tile dot bg="border-2 border-[#b9c4c6] bg-[#0c0c0c]"><G><rect x="4" y="4" width="34" height="34" rx="6" fill="#222" /><path d="m8 10 4 3-4 3.500M14.500 17h5" stroke="#fff" strokeWidth="1.700" fill="none" /></G></Tile>
        <Tile dot bg="bg-linear-to-b from-[#62ee6c] to-[#1bc92c]"><FaWhatsapp className="h-[35px] w-[35px] text-white" /></Tile>
        <div className="relative -mx-[2px] -mt-[2px] flex h-[46px] w-[46px] shrink-0">
          <svg viewBox="0 0 46 46" className="h-[46px] w-[46px]"><circle cx="23" cy="23" r="22.500" fill="#fff" /><circle cx="23" cy="23" r="18.800" fill="#5a4bbb" /><circle cx="14" cy="14" r="8.500" fill="#fff" /></svg>
          <span className="absolute top-[53px] left-[19px] h-[6px] w-[6px] rounded-full bg-white" />
        </div>
        <Tile dot bg="bg-[#b01111]"><G><path d="M21 10q-3 0-1 6 3 10 12 14 4-1 1-4-6-3-14 0-9 4-10 7 2 2 5-3 7-10 8-17 0-3-1-3z" fill="none" stroke="#fff" strokeWidth="1.900" /></G></Tile>
        <Tile dot bg="bg-linear-to-b from-[#8a37a4] to-[#5f2d88]"><FaGithub className="h-[36px] w-[36px] text-[#ece8f2]" /></Tile>
        <Tile dot bg="bg-white"><G><Code /></G></Tile>
      </div>
      <span className="-mt-[3px] ml-[20px] h-[54px] w-[2px] bg-[#bfc1bb]" />
      <div className="ml-[17px]"><Question /></div>
      <div className="ml-[12px] flex gap-[6px]">
        <Thumb mini="bg-white" badge={<Slack />}>
          <path fill="#1b1d22" d="M0 0h50v30H0z" /><path fill="#0f1013" d="M0 0h11v30H0z" /><path d="M1 12h9" stroke="#1c5a9a" strokeWidth="2" /><path d="M15 7h16" stroke="#6e665c" strokeWidth="3" /><path d="M13 14h16M13 19h18M13 23h12M37 5h9M37 10h10M37 15h8" stroke="#373c46" strokeWidth="1.200" /><path d="M18 17h12" stroke="#255a8f" strokeWidth="1" />
        </Thumb>
        <Thumb tall mini="bg-white" badge={<Code />}>
          <path fill="#1c1d1e" d="M0 0h50v30H0z" /><path fill="#2a2b2c" d="M0 0h50v1.500H0zM0 0h2v30H0z" /><path d="M4 5h6M4 8h7M4 11h5M4 14h7M4 17h5M15 5h12M16 8h8M18 11h9M18 14h7M15 17h10M31 5h12M31 9h8" stroke="#33373a" /><path d="M0 29.300h50" stroke="#1179c4" strokeWidth="1.400" />
        </Thumb>
        <Thumb mini="" badge={<Finder />}>
          <path fill="#31322d" d="M0 0h50v30H0z" /><path fill="#42433d" d="M0 0h10v30H0z" /><path d="M16 2.500h22" stroke="#5d5e58" strokeWidth="2" /><path d="M13 7h5v3h-5zM20 7h5v3h-5zM27 7h5v3h-5z" fill="#e8e8e8" /><path d="M13 12h5M20 12h5M27 12h5M2 7h5M2 10h5M2 13h5M2 16h5M2 19h5" stroke="#71726b" />
        </Thumb>
      </div>
      <svg viewBox="0 0 38 72" preserveAspectRatio="none" className="-mt-[4px] ml-[12px] h-[50px] w-[36px] shrink-0">
        <path d="M2 14h34l-4 52q-13 8-26 0z" fill="#7d8287" /><path d="M8 18q3 30 4 50-3-.500-6-2L3 18z" fill="#a5aaae" opacity=".6" /><path d="M30 18h5l-3 47-5 3z" fill="#54585d" opacity=".7" />
        <ellipse cx="19" cy="14" rx="17" ry="7" fill="#4c5054" stroke="#a9adb1" strokeWidth="1.500" />
        <path d="m4 13 3-9 6 3 5-5 4 4 6-4 3 7 4 3-9 6-10 2z" fill="#d9dbdc" /><path d="m11 7 4 7 3-6zM22 10l4 6 2-8z" fill="#4c6f8c" /><path d="m16 12 3 5 3-5z" fill="#b0563e" />
      </svg>
    </div>
  );
}

/* ---------- desktop ---------- */

export default function App() {
  return (
    <div className="relative h-[1600px] w-[2560px] overflow-hidden bg-[linear-gradient(to_bottom,#2d7189_0px,#286b83_160px,#3e7385_300px,#6d8a92_480px,#7d908f_620px,#85877d_760px,#8e8b81_1060px,#b4b4c2_1078px,#b4b4c0_1106px,#a5a196_1112px,#b4b1a6_1250px,#bdbeb7_1400px,#cbccc5_1600px)]">
      <svg className="absolute inset-0 h-full w-full opacity-15">
        <filter id="grain"><feTurbulence type="fractalNoise" baseFrequency="0.18" numOctaves="3" /><feColorMatrix type="saturate" values="0" /></filter>
        <rect width="100%" height="100%" filter="url(#grain)" />
      </svg>
      <div className="relative"><MenuBar /></div>

      {/* windows behind the browser */}
      <div className="absolute top-[49px] left-[37px] h-[1442px] w-[2513px] overflow-hidden rounded-[22px] border border-[#0a0a0a] bg-[#c4c5c9] shadow-[0_24px_60px_6px_rgba(0,0,0,0.6)]">
        <div className="h-[104px] border-t-2 border-r-2 border-[#5c5e5b] bg-linear-to-b from-[#303230] to-[#2c2e2c]" />
        <div className="h-[57px] border-t-2 border-r-2 border-t-black border-r-[#3a3a3a] bg-[#181818]" />
        <div className="flex h-[1229px] justify-end"><div className="h-full w-[30px] bg-linear-to-r from-[#a3a5a9] to-[#cbccd0]" /></div>
        <div className="flex h-[50px]">
          <div className="h-full w-[136px] bg-linear-to-b from-[#73767e] to-[#a5abb8]" />
          <div className="flex h-full grow justify-end bg-linear-to-b from-[#6a6a6b] to-[#acadb1]">
            <div className="h-full w-[200px] bg-linear-to-r from-transparent to-[#d5d6dc]" />
          </div>
        </div>
        <div className="absolute top-[1343px] -right-[33px] flex h-[81px] w-[81px] items-center rounded-full bg-linear-to-r from-[#b4b4b4] to-[#d2d2d2] pl-[21px] shadow-[0_1px_4px_rgba(0,0,0,0.5)]">
          <svg viewBox="0 0 12 20" className="h-[20px] w-[12px]"><path d="m11 1.500-9 8.500 9 8.500" fill="none" stroke="#111" strokeWidth="3" /></svg>
        </div>
      </div>
      <div className="absolute top-[49px] left-[324px] h-[40px] w-[1911px] rounded-t-[20px] border border-black bg-[#34363c] shadow-[inset_0_2px_0_#5a5c62]" />

      {/* browser window */}
      <div className="absolute top-[57px] -left-px w-[2522px] overflow-hidden rounded-[22px] border border-black">
        <div className="relative flex w-full flex-col border-t-2 border-[#6b6c6e]">
          <TabStrip />
          <Toolbar />
          <Bookmarks />
          <Checker />
          <div className="absolute inset-x-0 -top-[2px] h-[222px] rounded-t-[21px] border-2 border-b-0 border-[#5d5e62]" />
        </div>
      </div>

      <div className="absolute top-[1515px] left-[239px]"><Dock /></div>
    </div>
  );
}
